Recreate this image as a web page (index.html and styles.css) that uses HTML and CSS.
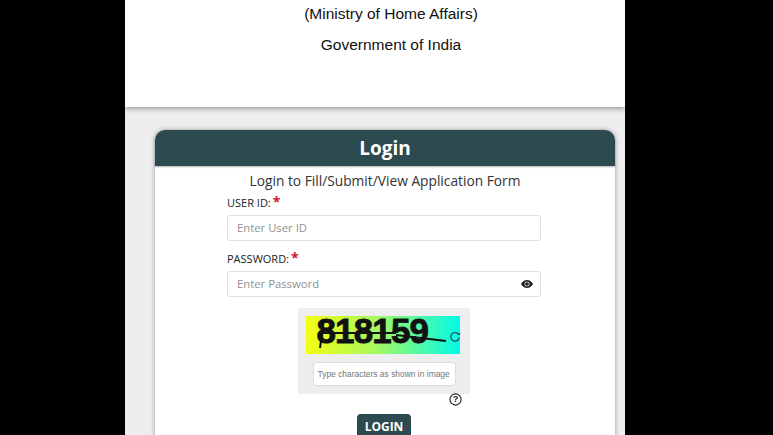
FILE: index.html
```html
<!DOCTYPE html>
<html lang="en">
<head>
<meta charset="utf-8">
<title>Login</title>
<link rel="stylesheet" href="styles.css">
</head>
<body>
<div class="page">
  <header class="masthead">
    <p class="ministry">(Ministry of Home Affairs)</p>
    <p class="gov">Government of India</p>
  </header>
  <main class="content">
    <section class="card">
      <h1 class="card-head">Login</h1>
      <div class="card-body">
        <p class="subtitle">Login to Fill/Submit/View Application Form</p>
        <form class="form">
          <label class="label">USER ID: <span class="req">*</span></label>
          <div class="field"><span class="ph">Enter User ID</span></div>
          <label class="label label-pw">PASSWORD: <span class="req">*</span></label>
          <div class="field"><span class="ph">Enter Password</span>
            <svg class="eye" viewBox="0 0 24 16" width="12" height="8"><path d="M12 0C6.500 0 2.200 3.400 0 8c2.200 4.600 6.500 8 12 8s9.800-3.400 12-8c-2.200-4.600-6.500-8-12-8z" fill="#222"/><circle cx="12" cy="8" r="5" fill="#ddd"/><circle cx="12" cy="8" r="3.600" fill="#222"/></svg>
          </div>
          <div class="captcha">
            <div class="captcha-img">
              <span class="captcha-text">818159</span>
              <svg class="captcha-strike" viewBox="0 0 154 38" width="154" height="38"><path d="M18 3 L14 32 M12 17 L90 17 M90 19 L140 25" stroke="#111" stroke-width="2" fill="none"/></svg>
              <svg class="refresh" viewBox="0 0 14 14" width="12" height="12"><path d="M11.500 4.500A5 5 0 1 0 12 7.500" stroke="#1f5a63" stroke-width="1.500" fill="none"/><path d="M9.500 4.800h3.500V1.500z" fill="#1f5a63"/></svg>
            </div>
            <div class="captcha-input">Type characters as shown in image</div>
          </div>
          <div class="help-row">
            <svg viewBox="0 0 14 14" width="13" height="13"><circle cx="7" cy="7" r="6" stroke="#222" stroke-width="1.200" fill="#fff"/><text x="7" y="10.200" text-anchor="middle" class="help-q">?</text></svg>
          </div>
          <div class="btn-row"><button type="button" class="btn">LOGIN</button></div>
        </form>
      </div>
    </section>
  </main>
</div>
</body>
</html>
```
FILE: styles.css
```css
html, body {
  margin: 0;
  height: 435px;
  overflow: hidden;
  background: #000;
}
.page {
  width: 500px;
  height: 435px;
  margin-left: 125px;
  background: #eeeeee;
  display: flex;
  flex-direction: column;
  overflow: hidden;
}
.masthead {
  height: 107px;
  flex: none;
  background: #fff;
  box-shadow: 0 2px 5px rgba(0,0,0,.35);
  font-family: "Liberation Sans", Arial, sans-serif;
  font-size: 15.500px;
  color: #111;
  text-align: center;
  padding: 5px 0 0 32px;
  box-sizing: border-box;
}
.masthead p { margin: 0; line-height: 18px; }
.gov { margin-top: 13px !important; }
.content {
  padding: 23px 10px 0 30px;
}
.card {
  background: #fff;
  border-radius: 10px 10px 0 0;
  box-shadow: 0 0 5px rgba(0,0,0,.35);
  height: 320px;
}
.card-head {
  margin: 0;
  height: 36px;
  background: #2c4a50;
  border-radius: 10px 10px 0 0;
  color: #fff;
  font: 700 19px/36px "Open Sans", sans-serif;
  text-align: center;
  box-shadow: 0 1px 2px rgba(0,0,0,.3);
}
.card-body {
  font-family: "Open Sans", sans-serif;
  color: #333;
}
.subtitle {
  margin: 0;
  padding-top: 5px;
  font-size: 13.750px;
  line-height: 19px;
  text-align: center;
}
.form {
  margin-left: 72px;
  width: 314px;
  display: flex;
  flex-direction: column;
}
.label {
  font-size: 11px;
  line-height: 16px;
  height: 20px;
  color: #222;
  margin-top: 5px;
}
.label-pw { margin-top: 10px; }
.req {
  color: #d8121c;
  font-size: 14px;
  font-weight: 700;
  line-height: 10px;
  margin-left: -1px;
}
.field {
  height: 26px;
  box-sizing: border-box;
  border: 1px solid #e0e0e0;
  border-radius: 3px;
  background: #fff;
  display: flex;
  align-items: center;
  justify-content: space-between;
  padding: 0 7px 2px 9px;
  font-size: 11.300px;
}
.eye { margin-top: 2px; }
.ph { color: #8f8f8f; }
.captcha {
  align-self: center;
  margin: 11px 0 0 -1px;
  width: 172px;
  height: 86px;
  box-sizing: border-box;
  background: #eeeeee;
  border-radius: 2px;
  padding: 8px 2px 0 0;
  display: flex;
  flex-direction: column;
  align-items: center;
}
.captcha-img {
  width: 154px;
  height: 38px;
  background: linear-gradient(90deg, #f4ff14 0%, #a8f860 45%, #00fbe8 100%);
  position: relative;
}
.captcha-text {
  display: block;
  padding-left: 11px;
  font: 700 35px/30px "Liberation Sans", sans-serif;
  color: #111;
  letter-spacing: -.85px;
  -webkit-text-stroke: .8px #111;
}
.captcha-strike { position: absolute; left: 0; top: 0; }
.refresh { position: absolute; right: -1px; top: 15px; }
.captcha-input {
  margin: 8px 0 0 3px;
  width: 143px;
  height: 24px;
  box-sizing: border-box;
  border: 1px solid #dcdcdc;
  border-radius: 3px;
  background: #fff;
  font: 8.450px/22px "Liberation Sans", sans-serif;
  color: #777;
  padding-left: 4px;
  white-space: nowrap;
}
.help-row {
  display: flex;
  justify-content: flex-end;
  padding-right: 79px;
  height: 13px;
  margin-top: -1px;
}
.help-q { font: 700 10px "Liberation Sans", sans-serif; fill: #222; }
.btn-row {
  display: flex;
  justify-content: center;
  margin-top: 8px;
}
.btn {
  width: 54px;
  height: 30px;
  padding: 0 0 6px;
  border: 0;
  border-radius: 4px 4px 0 0;
  background: #2c4a50;
  color: #fff;
  font: 700 12px "Open Sans", sans-serif;
}
```
